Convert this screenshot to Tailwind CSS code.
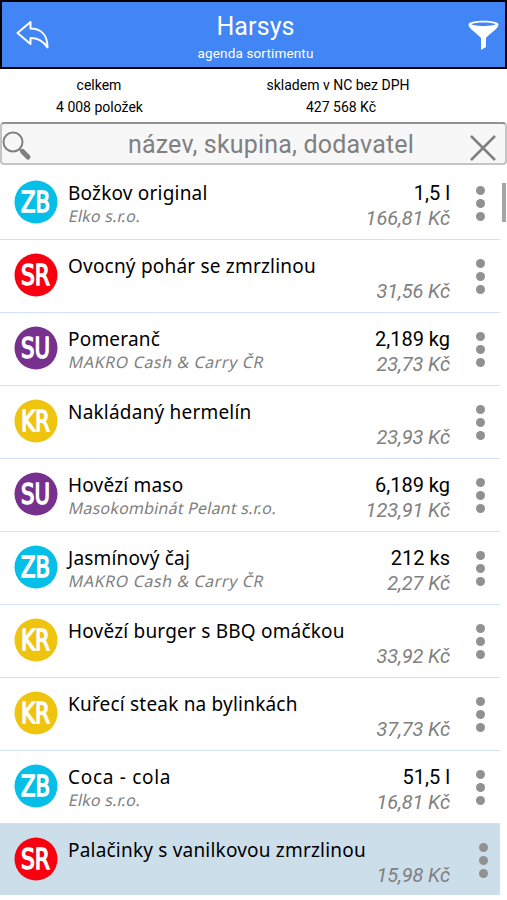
<!DOCTYPE html>
<html lang="cs">
<head>
    <meta charset="UTF-8">
    <meta name="viewport" content="width=device-width, initial-scale=1.0">
    <title>Harsys - agenda sortimentu</title>
    <script src="https://cdn.jsdelivr.net/npm/@tailwindcss/browser@4"></script>
</head>
<body class="bg-white text-black font-['Roboto',sans-serif] overflow-hidden">
    <header class="h-[69px] bg-[#4285f4] border-2 border-black flex items-center text-white">
        <button class="w-[60px] h-full pl-3.5 flex items-center">
            <svg class="w-[34px] h-[30px]" viewBox="0 0 34 30" fill="none" stroke="currentColor" stroke-width="2" stroke-linejoin="round">
                <path d="M1.500 13L14.500 2v6.500C25 8.500 31.500 15 31.500 27.500C27 20.500 22 18 14.500 18V24z"/>
            </svg>
        </button>
        <div class="flex-1 text-center pt-[7px] pl-1">
            <h1 class="text-[25px] leading-[30px] tracking-[0.1px]">Harsys</h1>
            <p class="text-[13.500px] leading-[22px] tracking-[0.15px]">agenda sortimentu</p>
        </div>
        <button class="w-[60px] h-full pl-[23px] flex items-center">
            <svg class="w-[31px] h-[30px]" viewBox="0 0 31 30" fill="currentColor">
                <path fill-rule="evenodd" d="M0.500 4.500C0.500 -0.500 30.500 -0.500 30.500 4.500C30.500 9 22 13 18 18V27L13 30V18C9 13 0.500 9 0.500 4.500zM3.500 4.200C7 6.500 24 6.500 27.500 4.200C24 2 7 2 3.500 4.200z"/>
            </svg>
        </button>
    </header>

    <section class="h-[53px] pt-[5px] flex text-center text-[14px] leading-[22px]">
        <div class="w-[198px]">
            <p>celkem</p>
            <p class="pl-px">4 008 položek</p>
        </div>
        <div class="w-[280px]">
            <p>skladem v NC bez DPH</p>
            <p class="pl-[6px]">427 568 Kč</p>
        </div>
    </section>

    <div class="h-[43px] bg-[#f7f7f7] border-2 border-[#c4c4c4] border-t-[#929292] rounded-[4px] flex items-center justify-between text-[#808080]">
        <svg class="w-[30px] h-[30px] mt-1" viewBox="0 0 30 30" fill="none" stroke="currentColor">
            <circle cx="11" cy="11" r="9.500" stroke-width="2"/>
            <path d="M17.500 18l4 4" stroke-width="2"/>
            <path d="M20.500 20.500l5.500 5.500" stroke-width="5" stroke-linecap="round"/>
        </svg>
        <span class="pl-[40px] pt-[3px] text-[25px] leading-[30px] tracking-[0.18px]">název, skupina, dodavatel</span>
        <svg class="w-[26px] h-[26px] mr-[9px] mt-[9px]" viewBox="0 0 26 26" fill="none" stroke="currentColor" stroke-width="2.500">
            <path d="M1 1l24 24M25 1L1 25"/>
        </svg>
    </div>

    <main class="flex pt-[2px]">
        <ul id="items" class="w-[500px]"></ul>
        <div class="w-1 h-[39px] ml-[1.500px] mt-4 bg-[#a5a5a5]"></div>
    </main>

    <script>
        const colors = { ZB: '#06bfe8', SR: '#f8000f', SU: '#78308f', KR: '#efc40f' };

        const items = [
            { group: 'ZB', name: 'Božkov original', supplier: 'Elko s.r.o.', qty: '1,5 l', price: '166,81 Kč' },
            { group: 'SR', name: 'Ovocný pohár se zmrzlinou', price: '31,56 Kč' },
            { group: 'SU', name: 'Pomeranč', supplier: 'MAKRO Cash &amp; Carry ČR', wide: true, qty: '2,189 kg', price: '23,73 Kč' },
            { group: 'KR', name: 'Nakládaný hermelín', price: '23,93 Kč' },
            { group: 'SU', name: 'Hovězí maso', supplier: 'Masokombinát Pelant s.r.o.', qty: '6,189 kg', price: '123,91 Kč' },
            { group: 'ZB', name: 'Jasmínový čaj', supplier: 'MAKRO Cash &amp; Carry ČR', wide: true, qty: '212 ks', price: '2,27 Kč' },
            { group: 'KR', name: 'Hovězí burger s BBQ omáčkou', price: '33,92 Kč' },
            { group: 'KR', name: 'Kuřecí steak na bylinkách', price: '37,73 Kč' },
            { group: 'ZB', name: '<span class="tracking-[0.7px]">Coca - cola</span>', supplier: 'Elko s.r.o.', qty: '51,5 l', price: '16,81 Kč' },
            { group: 'SR', name: 'Palačinky s vanilkovou zmrzlinou', price: '15,98 Kč', selected: true },
        ];

        document.getElementById('items').innerHTML = items.map(item => `
            <li class="h-[73px] flex ${item.selected ? 'bg-[#cddeeb] border-b-2 border-white' : 'border-b border-[#d3e1f8]'}">
                <svg class="w-[44px] h-[44px] ml-3.5 mt-[13px] shrink-0 overflow-visible" viewBox="0 0 44 44">
                    <circle cx="22" cy="22" r="21.500" fill="${colors[item.group]}"/>
                    <text x="7" y="32" textLength="29" lengthAdjust="spacingAndGlyphs" font-family="DejaVu Sans" font-size="28" stroke="#fff" stroke-width="1.500" fill="#fff">${item.group}</text>
                </svg>
                <div class="flex-1 pl-[10px] pt-[13px] font-['Noto_Sans',sans-serif] whitespace-nowrap">
                    <p class="text-[19px] leading-[26px] tracking-[0.2px]">${item.name}</p>
                    <p class="w-fit -skew-x-12 pl-px text-[16px] leading-[21px] text-[#808080] ${item.wide ? 'tracking-[0.600px]' : 'tracking-[0.2px]'}">${item.supplier || ''}</p>
                </div>
                <div class="w-0 pt-[13px] flex flex-col items-end whitespace-nowrap">
                    <p class="h-[26px] text-[20px] leading-[26px]">${item.qty || ''}</p>
                    <p class="text-[20px] leading-[25px] tracking-[-0.1px] italic text-[#808080]">${item.price}</p>
                </div>
                <div class="w-[50px] pt-[19px] flex flex-col gap-1 ${item.selected ? 'pl-[29px]' : 'pl-[26px]'}">
                    <i class="size-[9px] rounded-full bg-[#919191]"></i>
                    <i class="size-[9px] rounded-full bg-[#919191]"></i>
                    <i class="size-[9px] rounded-full bg-[#919191]"></i>
                </div>
            </li>`).join('');
    </script>
</body>
</html>
